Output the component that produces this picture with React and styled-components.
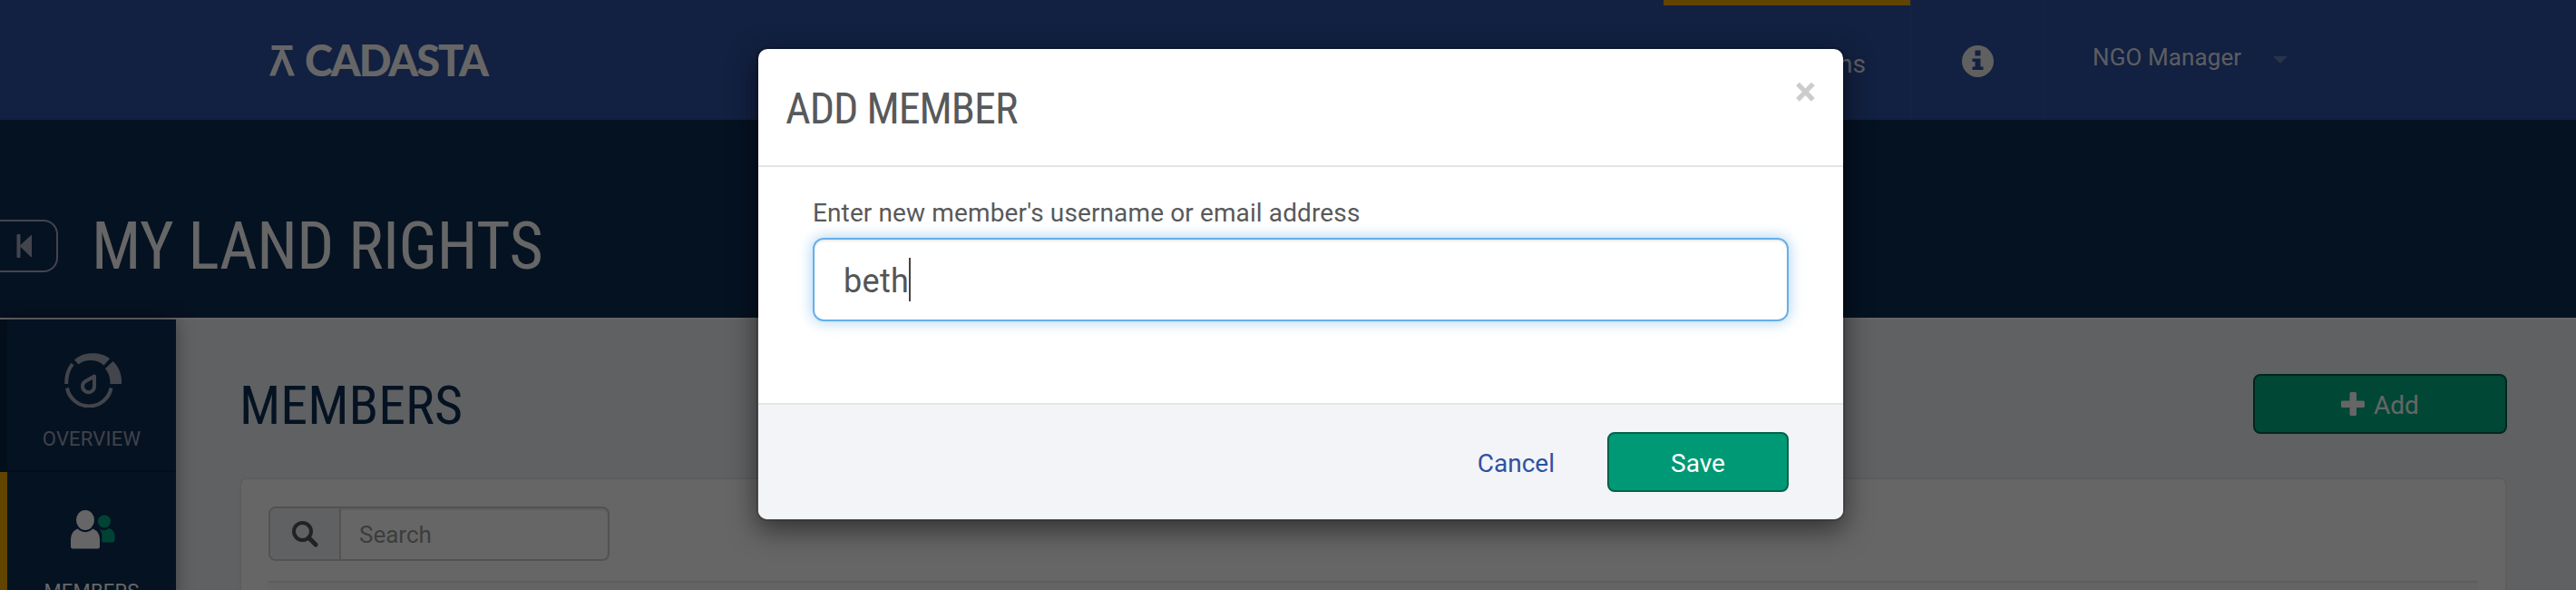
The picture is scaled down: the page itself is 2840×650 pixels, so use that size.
import React from "react";
import styled, { createGlobalStyle } from "styled-components";

const GlobalStyle = createGlobalStyle`
  * { box-sizing: border-box; }
  html, body { margin: 0; padding: 0; }
  body {
    width: 2840px;
    height: 650px;
    overflow: hidden;
    background: #f1f3f6;
    color: #555;
    font: 400 28px/40px Roboto, "Liberation Sans", sans-serif;
  }
  svg { display: block; flex: none; }
`;

const Page = styled.div`
  position: relative;
  display: flex;
  flex-direction: column;
  width: 2840px;
  height: 650px;
  overflow: hidden;
`;

const TopBar = styled.header`
  display: flex;
  height: 132px;
  flex: none;
  padding: 0 302px 0 297px;
  background: #2e51a3;
  color: #fff;
`;

const Brand = styled.a`
  display: flex;
  gap: 11px;
  margin-top: 50px;
  height: 34px;
`;

const BrandName = styled.span`
  font: 900 47px/33px Lato, sans-serif;
  letter-spacing: -2.1px;
  white-space: nowrap;
`;

const Nav = styled.nav`
  display: flex;
  margin-left: auto;
`;

const NavTab = styled.a`
  display: flex;
  justify-content: flex-end;
  width: 272px;
  padding: 45px 49px 0 0;
  border-top: 6px solid #f0ab00;
  line-height: 40px;
  color: rgba(255, 255, 255, 0.9);
`;

const NavInfo = styled.a`
  display: flex;
  justify-content: center;
  width: 148px;
  padding-top: 50px;
  border: solid #3458a8;
  border-width: 0 2px;
`;

const NavUser = styled.a`
  display: flex;
  gap: 35px;
  width: 284px;
  padding: 43px 0 0 53px;
  font-size: 26px;
  line-height: 40px;
  letter-spacing: 0.1px;
  color: rgba(255, 255, 255, 0.9);
  white-space: nowrap;
`;

const Caret = styled.i`
  width: 0;
  height: 0;
  margin-top: 19px;
  border: solid transparent;
  border-width: 8px 8px 0;
  border-top-color: #6780bb;
`;

const TitleBar = styled.div`
  display: flex;
  height: 220px;
  flex: none;
  padding-top: 110px;
  gap: 37px;
  background: #0e2d55;
  border-bottom: 2px solid #fff;
`;

const Collapse = styled.button`
  display: flex;
  width: 64px;
  height: 58px;
  padding: 14px 0 0 18px;
  background: none;
  border: 2px solid #a7adbe;
  border-left: 0;
  border-radius: 0 16px 16px 0;
`;

const Condensed = styled.span`
  font-family: "Roboto Condensed", Roboto, sans-serif;
  font-stretch: 75%;
  display: inline-block;
  white-space: nowrap;
`;

const OrgTitle = styled(Condensed)`
  font-size: 72px;
  line-height: 59px;
  letter-spacing: -0.4px;
  color: #fff;
`;

const Body = styled.div`
  display: flex;
  flex: 1;
  min-height: 0;
`;

const Sidebar = styled.aside`
  width: 194px;
  height: 320px;
  flex: none;
  background: #0e2d55;
  box-shadow: 0 0 20px rgba(0, 0, 0, 0.35);
`;

const SideItem = styled.a`
  display: flex;
  flex-direction: column;
  align-items: center;
  height: 168px;
  padding-top: 36px;
  border-left: 8px solid ${(p) => (p.$active ? "#f0ab00" : "#07233f")};
  border-bottom: 2px solid #07233f;
  color: ${(p) => (p.$active ? "#fff" : "#9fa5b8")};
  font-size: 22px;
  line-height: 30px;
  letter-spacing: 0.2px;
`;

const SideIcon = styled.span`
  display: flex;
  align-items: flex-start;
  justify-content: center;
  height: 62px;
  padding-top: ${(p) => p.$top}px;
  padding-left: 3px;
  margin-bottom: 19px;
`;

const Content = styled.main`
  flex: 1;
  padding: 60px 76px 0 70px;
`;

const ContentHead = styled.div`
  display: flex;
  justify-content: space-between;
  height: 114px;
`;

const Heading = styled(Condensed)`
  font-size: 60px;
  line-height: 70px;
  color: #0e2d55;
`;

const Button = styled.button`
  display: flex;
  align-items: center;
  justify-content: center;
  gap: 10px;
  width: ${(p) => p.$width}px;
  height: 66px;
  padding: 0;
  border: 2px solid #00634a;
  border-radius: 8px;
  background: ${(p) => p.$bg};
  color: #fff;
  font: inherit;
`;

const ButtonText = styled.span`
  padding-top: 3px;
`;

const Panel = styled.section`
  height: 300px;
  padding: 30px;
  border: 2px solid #e8e9eb;
  border-radius: 8px;
  background: #fff;
`;

const SearchGroup = styled.div`
  display: flex;
  width: 376px;
  height: 60px;
  border: 2px solid #ccc;
  border-radius: 8px;
  box-shadow: inset 0 2px 2px rgba(0, 0, 0, 0.075);
`;

const SearchAddon = styled.span`
  display: flex;
  align-items: center;
  width: 78px;
  padding-left: 24px;
  background: #f1f3f6;
  border-right: 2px solid #ccc;
  border-radius: 6px 0 0 6px;
`;

const SearchText = styled.span`
  padding-left: 20px;
  font-size: 26px;
  line-height: 58px;
  color: #999;
`;

const Table = styled.div`
  height: 80px;
  margin-top: 22px;
  border-top: 2px solid #e8e8e8;
  background: #fafafa;
`;

const Backdrop = styled.div`
  position: absolute;
  inset: 0;
  display: flex;
  justify-content: center;
  align-items: flex-start;
  padding: 52px 0 0 28px;
  background: rgba(0, 0, 0, 0.6);
`;

const Modal = styled.div`
  width: 1200px;
  height: 522px;
  border: 2px solid rgba(0, 0, 0, 0.2);
  border-radius: 12px;
  background: #fff;
  background-clip: padding-box;
  box-shadow: 0 10px 30px rgba(0, 0, 0, 0.5);
`;

const ModalHead = styled.div`
  display: flex;
  justify-content: space-between;
  height: 130px;
  padding: 27px 30px;
  border-bottom: 2px solid #e5e5e5;
`;

const ModalTitle = styled(Condensed)`
  font-size: 48px;
  line-height: 77px;
  letter-spacing: -1px;
  color: #58595b;
`;

const Close = styled.button`
  height: 40px;
  padding: 0;
  border: 0;
  background: none;
  font: 700 44px/40px Roboto, sans-serif;
  color: #ccc;
`;

const ModalBody = styled.div`
  height: 260px;
  padding: 31px 60px 0;
`;

const Label = styled.label`
  display: block;
  height: 47px;
  line-height: 40px;
  letter-spacing: 0.12px;
  color: #58595b;
`;

const Field = styled.div`
  display: flex;
  align-items: center;
  height: 92px;
  padding-left: 32px;
  border: 2px solid #66afe9;
  border-radius: 12px;
  font-size: 36px;
  letter-spacing: 0.3px;
  color: #555;
  box-shadow: inset 0 2px 2px rgba(0, 0, 0, 0.075), 0 0 16px rgba(102, 175, 233, 0.6);
`;

const FieldText = styled.span`
  padding-top: 3px;
`;

const TextCursor = styled.i`
  width: 2px;
  height: 48px;
  background: #444;
`;

const ModalFoot = styled.div`
  display: flex;
  align-items: center;
  justify-content: flex-end;
  gap: 58px;
  height: 128px;
  padding-right: 60px;
  border-top: 2px solid #e5e5e5;
  border-radius: 0 0 10px 10px;
  background: #f3f4f8;
`;

const Cancel = styled.a`
  padding-top: 3px;
  color: #2e51a3;
`;

const BrandMark = () => (
  <svg width="28" height="34" viewBox="0 0 28 34" fill="#fff">
    <path d="M2.500 0h23v5h-9.500L28 33.500h-6.500L14 14.500 6.500 33.500H0L12 5H2.500z" />
  </svg>
);

const InfoIcon = () => (
  <svg width="35" height="35" viewBox="0 0 35 35">
    <circle cx="17.500" cy="17.500" r="17.500" fill="#f0f0f0" />
    <path d="M14.500 5.500h6v6h-6zM11.500 14.500h9v9h3v3.500h-12v-3.500h3v-5.500h-3z" fill="#2e51a3" />
  </svg>
);

const StepIcon = () => (
  <svg width="18" height="26" viewBox="0 0 18 26" fill="#a7adbe">
    <path d="M1.500 0h2a1 1 0 0 1 1 1v11L16 1.300q1-.8 1 .4v23q0 1-1 .2L4.500 14v11a1 1 0 0 1-1 1h-2a1 1 0 0 1-1-1V1a1 1 0 0 1 1-1z" />
  </svg>
);

const GaugeIcon = () => (
  <svg width="64" height="60" viewBox="0 0 64 60" fill="none" stroke="#a7adbe">
    <path d="M3 38.500A24.700 24.700 0 0 0 51.500 38.500" strokeWidth="4" />
    <path d="M2.200 34C2 25 4 18 9 12" strokeWidth="4" />
    <path d="M11 7.500C19 -1.500 40-2.500 50 6L43.500 13.500C36 6.500 23 6.500 15.500 12.500z" fill="#a7adbe" stroke="none" />
    <path d="M53.500 9C60 15 63.500 23 63 34H50.500C50.500 27 49 22 45 17z" fill="#a7adbe" stroke="none" />
    <path d="M33 25.500L22.500 31.500A6.500 6.500 0 1 0 33 36.500z" strokeWidth="4" strokeLinejoin="round" />
  </svg>
);

const MembersIcon = () => (
  <svg width="49" height="43" viewBox="0 0 49 43">
    <g fill="#00a982">
      <circle cx="37" cy="12.500" r="7" />
      <path d="M31.500 20.500Q37 24 42.500 20q6 2.500 6 9v3.500q0 3-3 3H34.500V29Q34.500 24 31.500 20.500z" />
    </g>
    <g fill="#fff">
      <ellipse cx="16" cy="11" rx="10" ry="11" />
      <path d="M7.500 20.500Q16 28 24.500 20.500 32 24 32 32v8q0 2.500-2.500 2.500h-27Q0 42.500 0 40v-8Q0 24 7.500 20.500z" />
    </g>
  </svg>
);

const SearchIcon = () => (
  <svg width="29" height="29" viewBox="0 0 29 29" fill="none" stroke="#555">
    <circle cx="11.500" cy="11.500" r="9.500" strokeWidth="4" />
    <path d="M18.500 18.500L26 26" strokeWidth="5" strokeLinecap="round" />
  </svg>
);

const PlusIcon = () => (
  <svg width="26" height="26" viewBox="0 0 26 26" fill="#fff">
    <path d="M11 0h4.500q1.500 0 1.500 1.500V9.500h7.500q1.500 0 1.500 1.500v4.500q0 1.500-1.500 1.500H17v7.500q0 1.500-1.500 1.500H11Q9.500 26 9.500 24.500V17h-8Q0 17 0 15.500V11q0-1.500 1.500-1.500h8v-8Q9.500 0 11 0z" />
  </svg>
);

export default function App() {
  return (
    <Page>
      <GlobalStyle />
      <TopBar>
        <Brand>
          <BrandMark />
          <BrandName>CADASTA</BrandName>
        </Brand>
        <Nav>
          <NavTab>Organizations</NavTab>
          <NavInfo><InfoIcon /></NavInfo>
          <NavUser>NGO Manager<Caret /></NavUser>
        </Nav>
      </TopBar>
      <TitleBar>
        <Collapse><StepIcon /></Collapse>
        <OrgTitle>MY LAND RIGHTS</OrgTitle>
      </TitleBar>
      <Body>
        <Sidebar>
          <SideItem><SideIcon $top={1}><GaugeIcon /></SideIcon>OVERVIEW</SideItem>
          <SideItem $active><SideIcon $top={6}><MembersIcon /></SideIcon>MEMBERS</SideItem>
        </Sidebar>
        <Content>
          <ContentHead>
            <Heading>MEMBERS</Heading>
            <Button $width={280} $bg="#00b287"><PlusIcon /><ButtonText>Add</ButtonText></Button>
          </ContentHead>
          <Panel>
            <SearchGroup>
              <SearchAddon><SearchIcon /></SearchAddon>
              <SearchText>Search</SearchText>
            </SearchGroup>
            <Table />
          </Panel>
        </Content>
      </Body>
      <Backdrop>
        <Modal>
          <ModalHead>
            <ModalTitle>ADD MEMBER</ModalTitle>
            <Close>×</Close>
          </ModalHead>
          <ModalBody>
            <Label>Enter new member's username or email address</Label>
            <Field><FieldText>beth</FieldText><TextCursor /></Field>
          </ModalBody>
          <ModalFoot>
            <Cancel>Cancel</Cancel>
            <Button $width={200} $bg="#009975"><ButtonText>Save</ButtonText></Button>
          </ModalFoot>
        </Modal>
      </Backdrop>
    </Page>
  );
}
